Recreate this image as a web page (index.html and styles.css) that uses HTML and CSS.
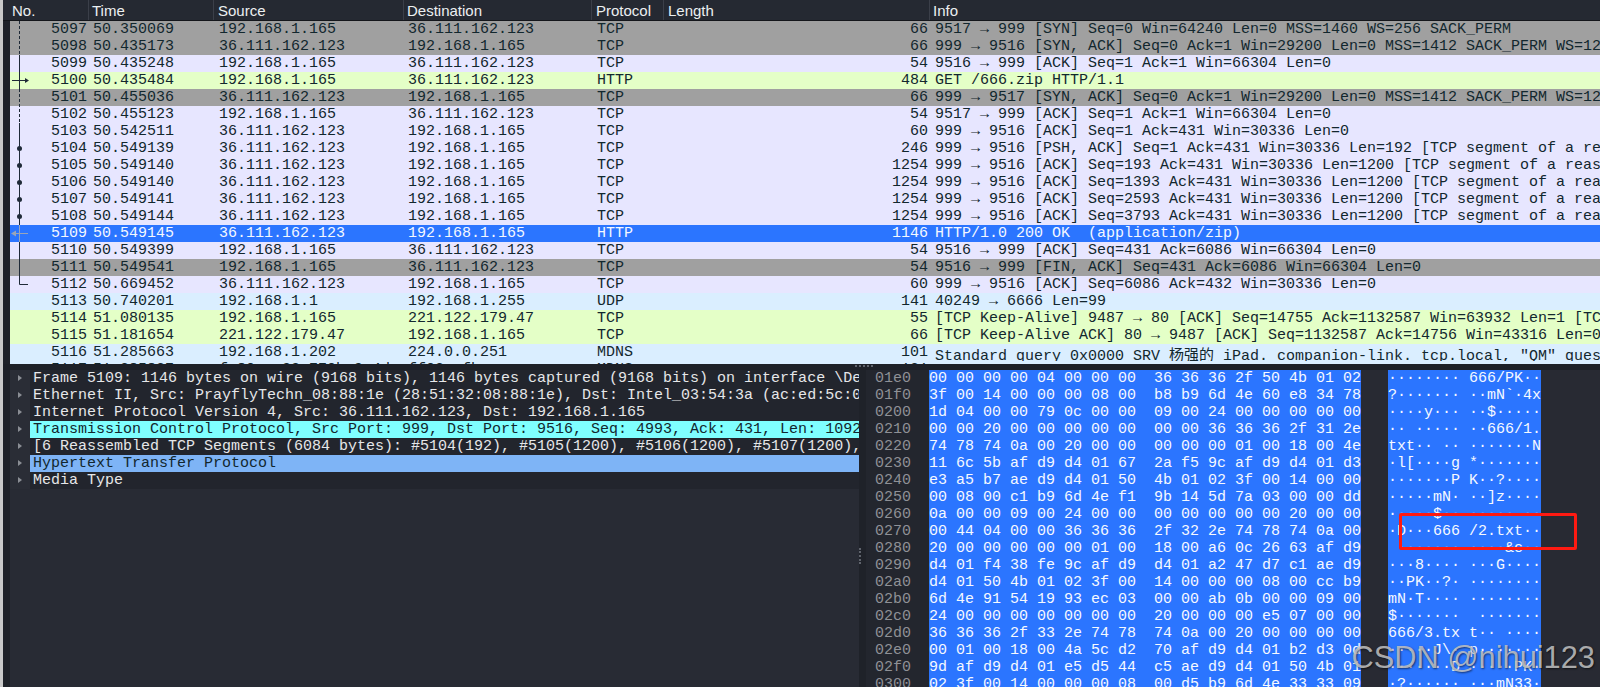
FILE: index.html
```html
<!DOCTYPE html>
<html lang="en">
<head>
  <meta charset="UTF-8" />
  <title>Wireshark capture</title>
  <link rel="stylesheet" href="styles.css">
</head>
<body>
  <div class="edge"></div>
  <div class="app">
    <!-- Column headers -->
    <div class="head">
      <span class="c-no">No.</span>
      <span class="c-time">Time</span>
      <span class="c-src">Source</span>
      <span class="c-dst">Destination</span>
      <span class="c-proto">Protocol</span>
      <span class="c-len">Length</span>
      <span class="c-info">Info</span>
    </div>

    <!-- Packet list -->
    <div class="packets">
      <div class="row gray"><span class="no">5097</span><span class="time">50.350069</span><span class="src">192.168.1.165</span><span class="dst">36.111.162.123</span><span class="proto">TCP</span><span class="len">66</span><span class="info">9517 → 999 [SYN] Seq=0 Win=64240 Len=0 MSS=1460 WS=256 SACK_PERM</span></div>
      <div class="row gray"><span class="no">5098</span><span class="time">50.435173</span><span class="src">36.111.162.123</span><span class="dst">192.168.1.165</span><span class="proto">TCP</span><span class="len">66</span><span class="info">999 → 9516 [SYN, ACK] Seq=0 Ack=1 Win=29200 Len=0 MSS=1412 SACK_PERM WS=128</span></div>
      <div class="row tcp"><span class="no">5099</span><span class="time">50.435248</span><span class="src">192.168.1.165</span><span class="dst">36.111.162.123</span><span class="proto">TCP</span><span class="len">54</span><span class="info">9516 → 999 [ACK] Seq=1 Ack=1 Win=66304 Len=0</span></div>
      <div class="row green"><span class="no">5100</span><span class="time">50.435484</span><span class="src">192.168.1.165</span><span class="dst">36.111.162.123</span><span class="proto">HTTP</span><span class="len">484</span><span class="info">GET /666.zip HTTP/1.1</span></div>
      <div class="row gray"><span class="no">5101</span><span class="time">50.455036</span><span class="src">36.111.162.123</span><span class="dst">192.168.1.165</span><span class="proto">TCP</span><span class="len">66</span><span class="info">999 → 9517 [SYN, ACK] Seq=0 Ack=1 Win=29200 Len=0 MSS=1412 SACK_PERM WS=128</span></div>
      <div class="row tcp"><span class="no">5102</span><span class="time">50.455123</span><span class="src">192.168.1.165</span><span class="dst">36.111.162.123</span><span class="proto">TCP</span><span class="len">54</span><span class="info">9517 → 999 [ACK] Seq=1 Ack=1 Win=66304 Len=0</span></div>
      <div class="row tcp"><span class="no">5103</span><span class="time">50.542511</span><span class="src">36.111.162.123</span><span class="dst">192.168.1.165</span><span class="proto">TCP</span><span class="len">60</span><span class="info">999 → 9516 [ACK] Seq=1 Ack=431 Win=30336 Len=0</span></div>
      <div class="row tcp"><span class="no">5104</span><span class="time">50.549139</span><span class="src">36.111.162.123</span><span class="dst">192.168.1.165</span><span class="proto">TCP</span><span class="len">246</span><span class="info">999 → 9516 [PSH, ACK] Seq=1 Ack=431 Win=30336 Len=192 [TCP segment of a reassembled PDU]</span></div>
      <div class="row tcp"><span class="no">5105</span><span class="time">50.549140</span><span class="src">36.111.162.123</span><span class="dst">192.168.1.165</span><span class="proto">TCP</span><span class="len">1254</span><span class="info">999 → 9516 [ACK] Seq=193 Ack=431 Win=30336 Len=1200 [TCP segment of a reassembled PDU]</span></div>
      <div class="row tcp"><span class="no">5106</span><span class="time">50.549140</span><span class="src">36.111.162.123</span><span class="dst">192.168.1.165</span><span class="proto">TCP</span><span class="len">1254</span><span class="info">999 → 9516 [ACK] Seq=1393 Ack=431 Win=30336 Len=1200 [TCP segment of a reassembled PDU]</span></div>
      <div class="row tcp"><span class="no">5107</span><span class="time">50.549141</span><span class="src">36.111.162.123</span><span class="dst">192.168.1.165</span><span class="proto">TCP</span><span class="len">1254</span><span class="info">999 → 9516 [ACK] Seq=2593 Ack=431 Win=30336 Len=1200 [TCP segment of a reassembled PDU]</span></div>
      <div class="row tcp"><span class="no">5108</span><span class="time">50.549144</span><span class="src">36.111.162.123</span><span class="dst">192.168.1.165</span><span class="proto">TCP</span><span class="len">1254</span><span class="info">999 → 9516 [ACK] Seq=3793 Ack=431 Win=30336 Len=1200 [TCP segment of a reassembled PDU]</span></div>
      <div class="row sel"><span class="no">5109</span><span class="time">50.549145</span><span class="src">36.111.162.123</span><span class="dst">192.168.1.165</span><span class="proto">HTTP</span><span class="len">1146</span><span class="info">HTTP/1.0 200 OK  (application/zip)</span></div>
      <div class="row tcp"><span class="no">5110</span><span class="time">50.549399</span><span class="src">192.168.1.165</span><span class="dst">36.111.162.123</span><span class="proto">TCP</span><span class="len">54</span><span class="info">9516 → 999 [ACK] Seq=431 Ack=6086 Win=66304 Len=0</span></div>
      <div class="row gray"><span class="no">5111</span><span class="time">50.549541</span><span class="src">192.168.1.165</span><span class="dst">36.111.162.123</span><span class="proto">TCP</span><span class="len">54</span><span class="info">9516 → 999 [FIN, ACK] Seq=431 Ack=6086 Win=66304 Len=0</span></div>
      <div class="row tcp"><span class="no">5112</span><span class="time">50.669452</span><span class="src">36.111.162.123</span><span class="dst">192.168.1.165</span><span class="proto">TCP</span><span class="len">60</span><span class="info">999 → 9516 [ACK] Seq=6086 Ack=432 Win=30336 Len=0</span></div>
      <div class="row blue"><span class="no">5113</span><span class="time">50.740201</span><span class="src">192.168.1.1</span><span class="dst">192.168.1.255</span><span class="proto">UDP</span><span class="len">141</span><span class="info">40249 → 6666 Len=99</span></div>
      <div class="row green"><span class="no">5114</span><span class="time">51.080135</span><span class="src">192.168.1.165</span><span class="dst">221.122.179.47</span><span class="proto">TCP</span><span class="len">55</span><span class="info">[TCP Keep-Alive] 9487 → 80 [ACK] Seq=14755 Ack=1132587 Win=63932 Len=1 [TCP segment of a reassembled PDU]</span></div>
      <div class="row green"><span class="no">5115</span><span class="time">51.181654</span><span class="src">221.122.179.47</span><span class="dst">192.168.1.165</span><span class="proto">TCP</span><span class="len">66</span><span class="info">[TCP Keep-Alive ACK] 80 → 9487 [ACK] Seq=1132587 Ack=14756 Win=43316 Len=0</span></div>
      <div class="row blue"><span class="no">5116</span><span class="time">51.285663</span><span class="src">192.168.1.202</span><span class="dst">224.0.0.251</span><span class="proto">MDNS</span><span class="len">101</span><span class="info low">Standard query 0x0000 SRV 杨强的 iPad._companion-link._tcp.local, "QM" question</span></div>
      <div class="row blue"><span class="no">5117</span><span class="time">51.285827</span><span class="src">fe80::c33:770b:9c4d</span><span class="dst">ff02::fb</span><span class="proto">MDNS</span><span class="len">121</span><span class="info low">Standard query 0x0000 SRV 杨强的 iPad._companion-link._tcp.local, "QM" question</span></div>

      <!-- Conversation graph in the No. column -->
      <svg class="graph" width="40" height="343" viewBox="0 0 40 343">
        <path class="flow dashed" d="M9.5 0V34M9.5 68V102" />
        <path class="flow" d="M9.5 34V68M9.5 102V204M9.5 221V263.5H18" />
        <path class="flow" d="M2 59.5H17" />
        <path class="head-fill" d="M15 57L19 59.5L15 62Z" />
        <circle class="head-fill" cx="9.5" cy="127.5" r="2.5" />
        <circle class="head-fill" cx="9.5" cy="144.5" r="2.5" />
        <circle class="head-fill" cx="9.5" cy="161.5" r="2.5" />
        <circle class="head-fill" cx="9.5" cy="178.5" r="2.5" />
        <circle class="head-fill" cx="9.5" cy="195.5" r="2.5" />
        <path class="flow-sel" d="M9.5 204V221M3 212.5H18" />
        <path class="head-sel" d="M6 209.5L1 212.5L6 215.5Z" />
      </svg>
    </div>

    <div class="split"><span class="grip-h"></span></div>

    <div class="bottom">
      <!-- Packet details -->
      <div class="tree">
        <div class="node"><span class="arrow"></span><span class="label">Frame 5109: 1146 bytes on wire (9168 bits), 1146 bytes captured (9168 bits) on interface \De</span></div>
        <div class="node"><span class="arrow"></span><span class="label">Ethernet II, Src: PrayflyTechn_08:88:1e (28:51:32:08:88:1e), Dst: Intel_03:54:3a (ac:ed:5c:0</span></div>
        <div class="node"><span class="arrow"></span><span class="label">Internet Protocol Version 4, Src: 36.111.162.123, Dst: 192.168.1.165</span></div>
        <div class="node"><span class="arrow"></span><span class="label mark-tcp">Transmission Control Protocol, Src Port: 999, Dst Port: 9516, Seq: 4993, Ack: 431, Len: 1092</span></div>
        <div class="node"><span class="arrow"></span><span class="label">[6 Reassembled TCP Segments (6084 bytes): #5104(192), #5105(1200), #5106(1200), #5107(1200),</span></div>
        <div class="node"><span class="arrow"></span><span class="label mark-http">Hypertext Transfer Protocol</span></div>
        <div class="node"><span class="arrow"></span><span class="label">Media Type</span></div>
      </div>

      <div class="grip-v"></div>

      <!-- Packet bytes -->
      <div class="bytes">
        <div class="line"><span class="off">01e0</span><span class="hex">00 00 00 00 04 00 00 00  36 36 36 2f 50 4b 01 02</span><span class="asc">········ 666/PK··</span></div>
        <div class="line"><span class="off">01f0</span><span class="hex">3f 00 14 00 00 00 08 00  b8 b9 6d 4e 60 e8 34 78</span><span class="asc">?······· ··mN`·4x</span></div>
        <div class="line"><span class="off">0200</span><span class="hex">1d 04 00 00 79 0c 00 00  09 00 24 00 00 00 00 00</span><span class="asc">····y··· ··$·····</span></div>
        <div class="line"><span class="off">0210</span><span class="hex">00 00 20 00 00 00 00 00  00 00 36 36 36 2f 31 2e</span><span class="asc">·· ····· ··666/1.</span></div>
        <div class="line"><span class="off">0220</span><span class="hex">74 78 74 0a 00 20 00 00  00 00 00 01 00 18 00 4e</span><span class="asc">txt·· ·· ·······N</span></div>
        <div class="line"><span class="off">0230</span><span class="hex">11 6c 5b af d9 d4 01 67  2a f5 9c af d9 d4 01 d3</span><span class="asc">·l[····g *·······</span></div>
        <div class="line"><span class="off">0240</span><span class="hex">e3 a5 b7 ae d9 d4 01 50  4b 01 02 3f 00 14 00 00</span><span class="asc">·······P K··?····</span></div>
        <div class="line"><span class="off">0250</span><span class="hex">00 08 00 c1 b9 6d 4e f1  9b 14 5d 7a 03 00 00 dd</span><span class="asc">·····mN· ··]z····</span></div>
        <div class="line"><span class="off">0260</span><span class="hex">0a 00 00 09 00 24 00 00  00 00 00 00 00 20 00 00</span><span class="asc">·····$·· ····· ··</span></div>
        <div class="line"><span class="off">0270</span><span class="hex">00 44 04 00 00 36 36 36  2f 32 2e 74 78 74 0a 00</span><span class="asc">·D···666 /2.txt··</span></div>
        <div class="line"><span class="off">0280</span><span class="hex">20 00 00 00 00 00 01 00  18 00 a6 0c 26 63 af d9</span><span class="asc"> ······· ····&amp;c··</span></div>
        <div class="line"><span class="off">0290</span><span class="hex">d4 01 f4 38 fe 9c af d9  d4 01 a2 47 d7 c1 ae d9</span><span class="asc">···8···· ···G····</span></div>
        <div class="line"><span class="off">02a0</span><span class="hex">d4 01 50 4b 01 02 3f 00  14 00 00 00 08 00 cc b9</span><span class="asc">··PK··?· ········</span></div>
        <div class="line"><span class="off">02b0</span><span class="hex">6d 4e 91 54 19 93 ec 03  00 00 ab 0b 00 00 09 00</span><span class="asc">mN·T···· ········</span></div>
        <div class="line"><span class="off">02c0</span><span class="hex">24 00 00 00 00 00 00 00  20 00 00 00 e5 07 00 00</span><span class="asc">$·······  ·······</span></div>
        <div class="line"><span class="off">02d0</span><span class="hex">36 36 36 2f 33 2e 74 78  74 0a 00 20 00 00 00 00</span><span class="asc">666/3.tx t·· ····</span></div>
        <div class="line"><span class="off">02e0</span><span class="hex">00 01 00 18 00 4a 5c d2  70 af d9 d4 01 b2 d3 0d</span><span class="asc">·····J\· p·······</span></div>
        <div class="line"><span class="off">02f0</span><span class="hex">9d af d9 d4 01 e5 d5 44  c5 ae d9 d4 01 50 4b 01</span><span class="asc">·······D ·····PK·</span></div>
        <div class="line"><span class="off">0300</span><span class="hex">02 3f 00 14 00 00 00 08  00 d5 b9 6d 4e 33 33 09</span><span class="asc">·?······ ···mN33·</span></div>

        <!-- Hand-drawn annotation and site watermark -->
        <div class="redbox"></div>
        <div class="stamp">CSDN @nihui123</div>
      </div>
    </div>
  </div>
</body>
</html>
```

FILE: styles.css
```css
html, body { margin:0; padding:0; height:100%; }
body {
  display:flex;
  height:687px;
  overflow:hidden;
  background:#1f2229;
  font-family:"Liberation Mono", "Noto Sans CJK SC", monospace;
  font-size:15px;
  line-height:17px;
}
.edge { width:3px; background:#c9c9c9; flex:none; }
.app { flex:1; min-width:0; display:flex; flex-direction:column; }

/* Column headers */
.head {
  display:flex;
  flex:none;
  height:20px;
  border-bottom:1px solid #14161b;
  background:#252932;
  color:#eceff1;
  font-family:"Liberation Sans", sans-serif;
  line-height:21px;
}
.head span {
  flex:none;
  box-sizing:border-box;
  padding-left:4px;
  height:20px;
  border-right:1px solid #3b3f49;
}
.head .c-no { width:86px; padding-left:9px; }
.head .c-time { width:125px; padding-left:3px; }
.head .c-src { width:190px; }
.head .c-dst { width:188px; padding-left:3px; }
.head .c-proto { width:72px; }
.head .c-len { width:266px; padding-left:4px; }
.head .c-info { flex:1; border-right:none; padding-left:3px; }

/* Packet list */
.packets {
  position:relative;
  flex:none;
  height:343px;
  margin-left:7px;
  overflow:hidden;
}
.row {
  display:flex;
  height:17px;
  overflow:hidden;
  white-space:pre;
  color:#12272e;
}
.row span { flex:none; box-sizing:border-box; height:17px; }
.row .no { width:79px; padding-right:2px; text-align:right; }
.row .time { width:125px; padding-left:4px; }
.row .src { width:190px; padding-left:5px; }
.row .dst { width:188px; padding-left:4px; }
.row .proto { width:72px; padding-left:5px; }
.row .len { width:266px; padding-right:2px; text-align:right; }
.row .info { flex:1; min-width:0; padding-left:5px; }
.row .info.low { padding-top:4px; height:21px; }
.gray { background:#a0a0a0; }
.tcp { background:#e7e6ff; }
.green { background:#e4ffc7; }
.blue { background:#daeeff; }
.sel { background:#2b75ff; color:#f4f8ff; }

.graph { position:absolute; left:0; top:0; }
.flow { fill:none; stroke:#1f2a38; stroke-width:1; }
.flow.dashed { stroke-dasharray:3 2; }
.head-fill { fill:#1f2a38; }
.flow-sel { fill:none; stroke:#9aa5b8; stroke-width:1; }
.head-sel { fill:#9aa5b8; }

.split {
  flex:none;
  height:6px;
  display:flex;
  justify-content:flex-end;
  padding-right:727px;
  background:#1d2027;
}
.grip-h { width:18px; height:2px; margin-top:1px; border-top:2px dotted #5f636c; }

/* Bottom panes */
.bottom { flex:1; min-height:0; display:flex; }
.tree {
  flex:none;
  width:849px;
  margin-left:7px;
  background:#282b34;
  overflow:hidden;
}
.node { display:flex; height:17px; white-space:nowrap; }
.arrow {
  flex:none;
  position:relative;
  width:20px;
  height:17px;
  background:#2a2d36;
}
.arrow::after {
  content:"";
  position:absolute;
  left:8px;
  top:5px;
  border-left:4px solid #8b8e95;
  border-top:3.5px solid transparent;
  border-bottom:3.5px solid transparent;
}
.label {
  flex:1;
  min-width:0;
  overflow:hidden;
  padding-left:3px;
  background:#22252d;
  color:#e6e7e9;
}
.mark-tcp { background:#7fffff; color:#12272e; }
.mark-http { background:#7eb4f6; color:#12272e; }
.grip-v {
  flex:none;
  width:2px;
  margin:178px 3px 0 0;
  height:16px;
  border-left:2px dotted #5f636c;
}
.bytes { position:relative; flex:1; background:#282a33; overflow:hidden; }
.line { display:flex; height:17px; white-space:pre; }
.off { flex:none; width:63px; box-sizing:border-box; padding-left:9px; background:#23262e; color:#8f9196; }
.hex { flex:none; width:432px; background:#2b75ff; color:#f6f9ff; }
.asc { flex:none; width:153px; margin-left:27px; background:#2b75ff; color:#f6f9ff; }

.redbox {
  position:absolute;
  left:533px;
  top:143px;
  width:172px;
  height:31px;
  border:3px solid #fe1a12;
  border-radius:2px;
}
.stamp {
  position:absolute;
  right:5px;
  bottom:12px;
  font-family:"Liberation Sans", sans-serif;
  font-size:30.8px;
  line-height:34px;
  color:rgba(196,196,196,0.85);
  text-shadow:1px 1px 2px rgba(0,0,0,0.55);
  white-space:nowrap;
}
```
